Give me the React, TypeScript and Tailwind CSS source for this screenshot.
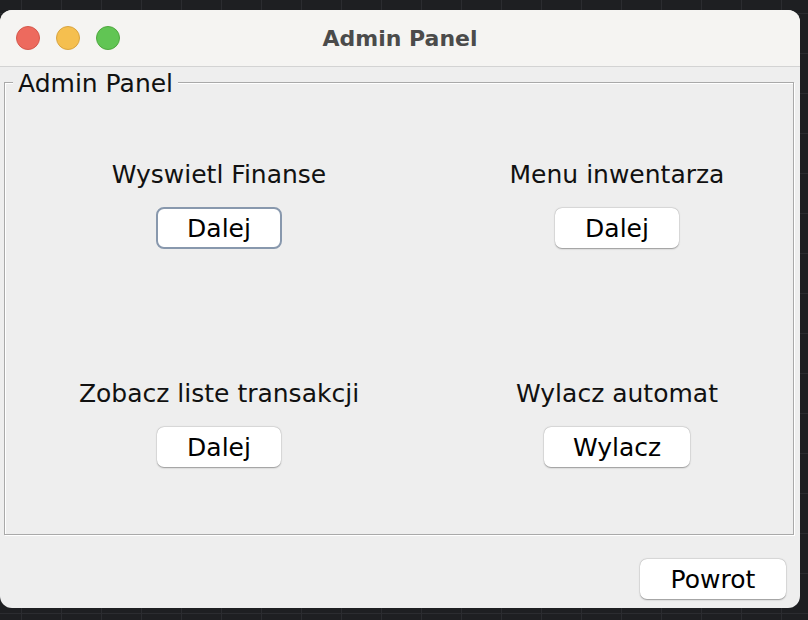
import type { ReactNode } from "react";

const font = { fontFamily: '"DejaVu Sans", "Liberation Sans", sans-serif' };

function AquaButton({ children, width, focused }: { children: ReactNode; width: string; focused?: boolean }) {
    if (focused) {
        return (
            <button
                type="button"
                className={`${width} h-[42px] mt-[18px] rounded-[8px] bg-white border-2 border-[#8898ad] text-[25px] leading-none text-black flex items-center justify-center`}
            >
                {children}
            </button>
        );
    }
    return (
        <button
            type="button"
            className={`${width} h-[40px] mt-[19px] rounded-[7px] bg-white shadow-[0_0.5px_1.5px_rgba(0,0,0,0.35),0_0_0_0.5px_rgba(0,0,0,0.06)] text-[25px] leading-none text-black flex items-center justify-center`}
        >
            {children}
        </button>
    );
}

function Opcja({ label, button, width, focused }: { label: string; button: string; width: string; focused?: boolean }) {
    return (
        <div className="flex flex-col items-center">
            <span className="text-[25px] leading-[28px] text-[#111] whitespace-nowrap">{label}</span>
            {focused ? (
                <AquaButton width="w-[126px]" focused>{button}</AquaButton>
            ) : (
                <AquaButton width={width}>{button}</AquaButton>
            )}
        </div>
    );
}

export default function App() {
    return (
        <div
            className="w-[808px] h-[620px] pt-[10px] bg-[#1e1f22] bg-[linear-gradient(to_right,#2b2c30_1px,transparent_1px),linear-gradient(to_bottom,#2b2c30_1px,transparent_1px)] bg-[size:40px_40px] bg-[position:21px_13px] overflow-hidden"
            style={font}
        >
            <div className="w-[800px] h-[598px] rounded-[12px] overflow-hidden bg-[#eeeeee] flex flex-col">
                {/* pasek tytulu */}
                <div className="relative h-[57px] shrink-0 bg-[#f5f4f2] border-b border-[#d3d3d3] flex items-center">
                    <div className="flex items-center gap-[16px] pl-[16px]">
                        <span className="w-[24px] h-[24px] rounded-full bg-[#ed6a5e] border border-[#d5584c]" />
                        <span className="w-[24px] h-[24px] rounded-full bg-[#f5bf4f] border border-[#d9a440]" />
                        <span className="w-[24px] h-[24px] rounded-full bg-[#61c554] border border-[#4fa83f]" />
                    </div>
                    <div className="absolute inset-0 flex items-center justify-center pointer-events-none">
                        <span className="text-[22px] font-bold text-[#4b4b4b]">Admin Panel</span>
                    </div>
                </div>

                {/* zawartosc */}
                <div className="flex-1 flex flex-col pl-[4px] pr-[6px] pt-[1px]">
                    <fieldset className="h-[467px] border border-[#a9a9a9] shadow-[inset_1px_1px_0_#ffffff,1px_1px_0_#ffffff]">
                        <legend className="ml-[8px] px-[5px] pt-[4px] bg-[#eeeeee] text-[25px] leading-[24px] text-[#111]">
                            Admin Panel
                        </legend>
                        <div className="grid grid-cols-[300px_300px] gap-x-[98px] gap-y-[131px] pl-[64px] pt-[65px]">
                            <Opcja label="Wyswietl Finanse" button="Dalej" width="w-[124px]" focused />
                            <Opcja label="Menu inwentarza" button="Dalej" width="w-[124px]" />
                            <Opcja label="Zobacz liste transakcji" button="Dalej" width="w-[124px]" />
                            <Opcja label="Wylacz automat" button="Wylacz" width="w-[146px]" />
                        </div>
                    </fieldset>
                    <div className="flex justify-end pt-[24px] pr-[8px]">
                        <button
                            type="button"
                            className="w-[146px] h-[40px] rounded-[7px] bg-white shadow-[0_0.5px_1.5px_rgba(0,0,0,0.35),0_0_0_0.5px_rgba(0,0,0,0.06)] text-[25px] leading-none text-black flex items-center justify-center"
                        >
                            Powrot
                        </button>
                    </div>
                </div>
            </div>
        </div>
    );
}
